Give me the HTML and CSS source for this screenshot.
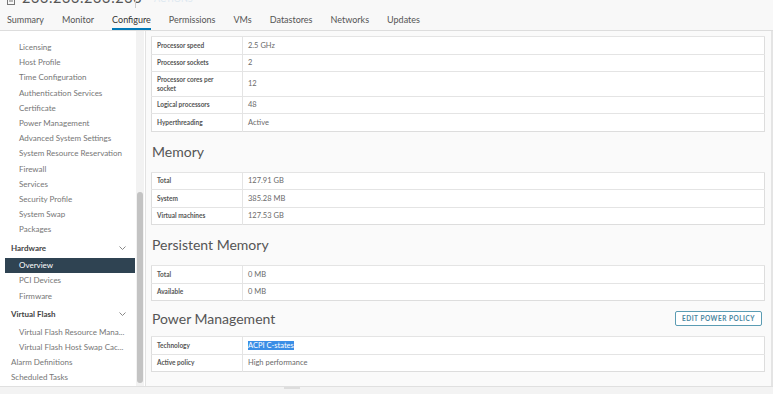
FILE: index.html
```html
<!DOCTYPE html>
<html lang="en">
<head>
    <meta charset="UTF-8">
    <title>Host - Configure</title>
    <link rel="stylesheet" href="styles.css">
</head>
<body>
    <div class="top">
        <div class="title">
            <div class="title-inner">
                <svg class="host-icon" width="8" height="9" viewBox="0 0 8 9"><rect x="0.5" y="0.5" width="7" height="8" fill="none" stroke="#777"/><line x1="2" y1="3" x2="6" y2="3" stroke="#777"/><line x1="2" y1="5" x2="6" y2="5" stroke="#777"/></svg>
                <span class="host-name">233.233.233.233</span>
                <span class="sep"></span>
                <span class="actions">ACTIONS</span>
            </div>
        </div>
        <div class="tabs">
            <span class="tab">Summary</span>
            <span class="tab">Monitor</span>
            <span class="tab active">Configure</span>
            <span class="tab">Permissions</span>
            <span class="tab">VMs</span>
            <span class="tab">Datastores</span>
            <span class="tab">Networks</span>
            <span class="tab">Updates</span>
        </div>
    </div>

    <div class="main">
        <div class="sidebar">
            <ul class="nav">
                <li class="item">Licensing</li>
                <li class="item">Host Profile</li>
                <li class="item">Time Configuration</li>
                <li class="item">Authentication Services</li>
                <li class="item">Certificate</li>
                <li class="item">Power Management</li>
                <li class="item">Advanced System Settings</li>
                <li class="item">System Resource Reservation</li>
                <li class="item">Firewall</li>
                <li class="item">Services</li>
                <li class="item">Security Profile</li>
                <li class="item">System Swap</li>
                <li class="item">Packages</li>
                <li class="group">Hardware <svg class="chev" width="7" height="4" viewBox="0 0 7 4"><polyline points="0.5,0.5 3.5,3.5 6.5,0.5" fill="none" stroke="#888"/></svg></li>
                <li class="item selected">Overview</li>
                <li class="item">PCI Devices</li>
                <li class="item">Firmware</li>
                <li class="group">Virtual Flash <svg class="chev" width="7" height="4" viewBox="0 0 7 4"><polyline points="0.5,0.5 3.5,3.5 6.5,0.5" fill="none" stroke="#888"/></svg></li>
                <li class="item">Virtual Flash Resource Mana...</li>
                <li class="item">Virtual Flash Host Swap Cac...</li>
                <li class="item root">Alarm Definitions</li>
                <li class="item root">Scheduled Tasks</li>
            </ul>
            <div class="track"><div class="thumb"></div></div>
        </div>

        <div class="content">
            <table class="props">
                <tr><td class="k">Processor speed</td><td class="v">2.5 GHz</td></tr>
                <tr><td class="k">Processor sockets</td><td class="v">2</td></tr>
                <tr class="tall"><td class="k">Processor cores per<br>socket</td><td class="v">12</td></tr>
                <tr><td class="k">Logical processors</td><td class="v">48</td></tr>
                <tr><td class="k">Hyperthreading</td><td class="v">Active</td></tr>
            </table>

            <h2 class="section">Memory</h2>
            <table class="props">
                <tr><td class="k">Total</td><td class="v">127.91 GB</td></tr>
                <tr><td class="k">System</td><td class="v">385.28 MB</td></tr>
                <tr><td class="k">Virtual machines</td><td class="v">127.53 GB</td></tr>
            </table>

            <h2 class="section">Persistent Memory</h2>
            <table class="props">
                <tr><td class="k">Total</td><td class="v">0 MB</td></tr>
                <tr><td class="k">Available</td><td class="v">0 MB</td></tr>
            </table>

            <div class="section-row">
                <h2 class="section">Power Management</h2>
                <button class="btn">EDIT POWER POLICY</button>
            </div>
            <table class="props">
                <tr><td class="k">Technology</td><td class="v"><span class="hl">ACPI C-states</span></td></tr>
                <tr><td class="k">Active policy</td><td class="v">High performance</td></tr>
            </table>
        </div>
    </div>
    <div class="footer"><span class="grip"></span></div>
</body>
</html>
```
FILE: styles.css
```css
body{
    margin: 0;
    background-color: #fff;
    font-family: "Lato", "Open Sans", sans-serif;
    color: #555;
    overflow: hidden;
}

.top{
    background-color: #f8f8f8;
    border-bottom: 1px solid #ddd;
}

.title{
    height: 10px;
    overflow: hidden;
}
.title-inner{
    display: flex;
    align-items: center;
    height: 20px;
    margin-top: -12px;
    padding-left: 7px;
}
.host-icon{
    margin-top: 4px;
}
.host-name{
    margin-left: 7px;
    width: 113px;
    font-size: 14.5px;
    line-height: 20px;
    letter-spacing: 0.6px;
    color: #555;
    white-space: nowrap;
}
.sep{
    width: 1px;
    height: 20px;
    background-color: #ccc;
}
.actions{
    margin-left: 18px;
    font-size: 9px;
    color: #dde8f1;
}

.tabs{
    display: flex;
    gap: 18px;
    padding-left: 7px;
    height: 20px;
}
.tab{
    font-size: 9px;
    line-height: 20px;
    color: #555;
    border-bottom: 2px solid transparent;
}
.tab.active{
    border-bottom-color: #0079b8;
    color: #333;
}

.main{
    display: flex;
    height: 355px;
}

.sidebar{
    width: 145px;
    display: flex;
    border-right: 1px solid #e2e2e2;
    background-color: #fff;
}
.nav{
    list-style: none;
    margin: 0;
    padding: 9px 0 0 5px;
    width: 130px;
}
.item{
    font-size: 8px;
    line-height: 15.2px;
    height: 15.2px;
    padding-left: 14px;
    color: #767676;
    white-space: nowrap;
}
.item.root{
    padding-left: 6px;
}
.item.selected{
    background-color: #2f4352;
    color: #fff;
}
.group{
    display: flex;
    justify-content: space-between;
    align-items: center;
    height: 20.8px;
    padding: 0 9px 0 6px;
    font-size: 8px;
    font-weight: bold;
    color: #444;
}
.track{
    width: 8px;
    margin-left: 1px;
    background-color: #f2f2f2;
    display: flex;
    flex-direction: column;
}
.thumb{
    margin-top: 161px;
    height: 191px;
    margin-left: 1px;
    width: 6px;
    border-radius: 3px;
    background-color: #c3c3c3;
}

.content{
    flex: 1;
    background-color: #fafafa;
    padding: 5px 6px 0 5px;
    border-right: 2px solid #e4e4e4;
}

table.props{
    width: 100%;
    border-collapse: collapse;
    background-color: #fff;
    border: 1px solid #ddd;
}
table.props td{
    border-top: 1px solid #e4e4e4;
    height: 16.5px;
    padding: 0 5px;
    vertical-align: middle;
}
table.props tr.tall td{
    height: 23.5px;
}
td.k{
    width: 80px;
    border-right: 1px solid #e4e4e4;
    font-size: 6.5px;
    font-weight: bold;
    color: #565656;
    line-height: 9px;
}
td.v{
    font-size: 7.5px;
    color: #6a6a6a;
}
.hl{
    background-color: #3a8ee6;
    color: #fff;
}

.section-row{
    display: flex;
    justify-content: space-between;
    align-items: center;
}
h2.section{
    margin: 9px 0 9px 1px;
    height: 22px;
    line-height: 22px;
    font-size: 14px;
    font-weight: normal;
    color: #555;
}
.section-row h2.section{
    margin: 7px 0 6px 1px;
}
.btn{
    margin: 0 3px 0 0;
    height: 15px;
    padding: 0 6px;
    border: 1px solid #5b9cb3;
    border-radius: 2px;
    background-color: #fff;
    color: #4a86a0;
    font-family: "Lato", sans-serif;
    font-size: 6.5px;
    font-weight: bold;
    letter-spacing: 0.5px;
}

.footer{
    height: 8px;
    border-top: 1px solid #e0e0e0;
    background-color: #f3f3f3;
}
.grip{
    display: block;
    margin-left: 284px;
    width: 16px;
    height: 2px;
    background-color: #ddd;
}
```
